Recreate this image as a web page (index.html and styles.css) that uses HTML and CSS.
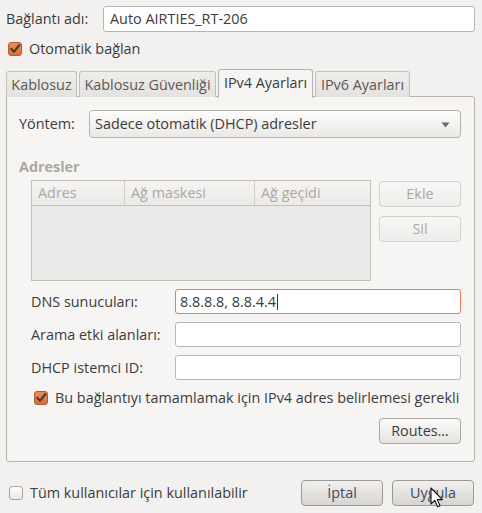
FILE: index.html
```html
<!DOCTYPE html>
<html lang="tr">
<head>
<meta charset="utf-8">
<link rel="stylesheet" href="styles.css">
</head>
<body>
<div class="dialog">
  <div class="name-row">
    <label class="lbl">Bağlantı adı:</label>
    <div class="entry name-entry">Auto AIRTIES_RT-206</div>
  </div>
  <div class="check-row auto">
    <span class="cb checked"><svg width="14" height="14" viewBox="0 0 14 14"><path d="M3.2 6.8 L6 9.8 L11.4 3" fill="none" stroke="#4a3b35" stroke-width="2.1" stroke-linecap="round" stroke-linejoin="round"/></svg></span>
    <span>Otomatik bağlan</span>
  </div>
  <div class="tabs">
    <div class="tab t1">Kablosuz</div>
    <div class="tab t2">Kablosuz Güvenliği</div>
    <div class="tab t3 active">IPv4 Ayarları</div>
    <div class="tab t4">IPv6 Ayarları</div>
  </div>
  <div class="panel">
    <div class="method-row">
      <label class="lbl">Yöntem:</label>
      <div class="combo">
        <span>Sadece otomatik (DHCP) adresler</span>
        <svg class="arrow" width="9" height="6" viewBox="0 0 9 6"><path d="M0.5 0.5 H8.5 L4.5 5.5 Z" fill="#6e6964"/></svg>
      </div>
    </div>
    <div class="section-title">Adresler</div>
    <div class="addr">
      <div class="table">
        <div class="thead">
          <div class="th c1">Adres</div>
          <div class="th c2">Ağ maskesi</div>
          <div class="th c3">Ağ geçidi</div>
        </div>
        <div class="tbody"></div>
      </div>
      <div class="side-buttons">
        <div class="btn disabled">Ekle</div>
        <div class="btn disabled">Sil</div>
      </div>
    </div>
    <div class="form">
      <div class="form-row">
        <label class="lbl">DNS sunucuları:</label>
        <div class="entry focus">8.8.8.8, 8.8.4.4<span class="caret"></span></div>
      </div>
      <div class="form-row">
        <label class="lbl">Arama etki alanları:</label>
        <div class="entry"></div>
      </div>
      <div class="form-row">
        <label class="lbl">DHCP istemci ID:</label>
        <div class="entry"></div>
      </div>
    </div>
    <div class="check-row req">
      <span class="cb checked"><svg width="14" height="14" viewBox="0 0 14 14"><path d="M3.2 6.8 L6 9.8 L11.4 3" fill="none" stroke="#4a3b35" stroke-width="2.1" stroke-linecap="round" stroke-linejoin="round"/></svg></span>
      <span>Bu bağlantıyı tamamlamak için IPv4 adres belirlemesi gerekli</span>
    </div>
    <div class="routes-row">
      <div class="btn">Routes…</div>
    </div>
  </div>
  <div class="bottom">
    <div class="check-row all">
      <span class="cb"></span>
      <span>Tüm kullanıcılar için kullanılabilir</span>
    </div>
    <div class="actions">
      <div class="btn big">İptal</div>
      <div class="btn big">Uygula</div>
    </div>
  </div>
  <svg class="cursor" width="14" height="22" viewBox="0 0 14 22"><path d="M1 1 L1 17 L4.8 13.4 L7.6 19.8 L10 18.8 L7.3 12.6 L12.4 12.6 Z" fill="#ffffff" stroke="#111" stroke-width="1.1" stroke-linejoin="round"/></svg>
</div>
</body>
</html>
```
FILE: styles.css
```css
* { box-sizing: border-box; }
html, body {
  margin: 0;
  padding: 0;
  background: #f2f1f0;
}
body {
  font-family: "Open Sans", "Noto Sans", sans-serif;
  font-size: 14.4px;
  line-height: 18px;
  color: #3c3c3c;
  width: 482px;
  height: 513px;
  overflow: hidden;
}
.dialog {
  position: relative;
  width: 482px;
  height: 513px;
}
.lbl { white-space: nowrap; }

.name-row {
  display: flex;
  align-items: center;
  padding: 6px 7px 0 6px;
}
.name-row .lbl { width: 97px; }
.entry {
  height: 25px;
  background: #fff;
  border: 1px solid #b9b6b1;
  border-radius: 3px;
  padding: 0 4px;
  display: flex;
  align-items: center;
  white-space: nowrap;
}
.name-entry { flex: 1; height: 26px; padding-left: 6px; }
.entry.focus { border-color: #ec7b4e; }
.caret {
  display: inline-block;
  width: 1px;
  height: 16px;
  background: #333;
  margin-left: 1px;
}

.check-row {
  display: flex;
  align-items: center;
  gap: 7px;
  white-space: nowrap;
}
.cb {
  width: 14px;
  height: 14px;
  border: 1px solid #a6a29d;
  border-radius: 3px;
  background: linear-gradient(#fdfdfc, #eceae7);
  flex: none;
  display: block;
  position: relative;
}
.cb.checked {
  border-color: #b45a30;
  background: linear-gradient(#ea8a58, #d86f3c);
}
.cb svg { position: absolute; left: -1px; top: -1px; }
.auto { margin: 10px 0 0 8px; height: 14px; }

.tabs {
  display: flex;
  align-items: flex-end;
  margin: 12px 0 0 6px;
  height: 29px;
  position: relative;
  z-index: 2;
}
.tab {
  height: 26px;
  border: 1px solid #c3c0bb;
  border-bottom: none;
  border-radius: 3px 3px 0 0;
  background: linear-gradient(#eeedeb, #e4e2df);
  color: #5b5855;
  display: flex;
  align-items: center;
  justify-content: center;
  white-space: nowrap;
  margin-bottom: 0;
}
.t1 { width: 71px; }
.t2 { width: 137px; margin-left: 2px; }
.t3 { width: 95px; margin-left: 2px; }
.t4 { width: 95px; margin-left: 2px; }
.tab.active {
  height: 29px;
  background: #f6f5f4;
  border-color: #b7b4af;
  color: #3c3c3c;
  margin-bottom: -1px;
  padding-bottom: 2px;
}

.panel {
  margin: -1px 7px 0 6px;
  height: 366px;
  border: 1px solid #b7b4af;
  border-radius: 0 3px 3px 3px;
  background: #f6f5f4;
  padding: 13px 13px 0 12px;
  position: relative;
  z-index: 1;
}
.method-row {
  display: flex;
  align-items: center;
}
.method-row .lbl { width: 70px; }
.combo {
  flex: 1;
  height: 28px;
  border: 1px solid #b6b3ae;
  border-radius: 4px;
  background: linear-gradient(#fcfcfb, #ebe9e6);
  display: flex;
  align-items: center;
  justify-content: space-between;
  padding: 0 10px 0 5px;
  white-space: nowrap;
}
.arrow { margin-top: 1px; }

.section-title {
  margin-top: 21px;
  font-weight: bold;
  color: #aca8a2;
  height: 16px;
  line-height: 16px;
}
.addr {
  display: flex;
  gap: 8px;
  margin: 5px 0 0 12px;
  align-items: flex-start;
}
.table {
  width: 340px;
  height: 101px;
  border: 1px solid #c4c1bc;
  background: #ebeae8;
}
.thead {
  display: flex;
  height: 25px;
  border-bottom: 1px solid #c4c1bc;
  background: linear-gradient(#f5f4f3, #eceae8);
}
.th {
  color: #aca8a2;
  padding-left: 6px;
  display: flex;
  align-items: center;
  white-space: nowrap;
}
.c1 { width: 93px; border-right: 1px solid #d2cfcb; }
.c2 { width: 130px; border-right: 1px solid #d2cfcb; }
.c3 { flex: 1; }
.side-buttons {
  display: flex;
  flex-direction: column;
  gap: 9px;
  width: 82px;
  padding-top: 1px;
}
.btn {
  height: 26px;
  border: 1px solid #a9a6a1;
  border-radius: 4px;
  background: linear-gradient(#fbfbfa, #e6e4e1);
  display: flex;
  align-items: center;
  justify-content: center;
  white-space: nowrap;
  color: #3c3c3c;
}
.btn.disabled {
  border-color: #d3d0cc;
  background: linear-gradient(#f8f7f6, #efedeb);
  color: #aca8a2;
}

.form {
  margin: 8px 0 0 12px;
  display: flex;
  flex-direction: column;
  gap: 8px;
}
.form-row {
  display: flex;
  align-items: center;
}
.form-row .lbl { width: 144px; }
.form-row .entry { flex: 1; }

.req { margin: 11px 0 0 15px; height: 14px; }
.routes-row {
  display: flex;
  justify-content: flex-end;
  margin-top: 13px;
}
.routes-row .btn { width: 82px; }

.bottom {
  display: flex;
  justify-content: space-between;
  align-items: center;
  padding: 0 8px 0 9px;
  margin-top: 18px;
}
.all { gap: 7px; }
.actions { display: flex; gap: 9px; }
.btn.big {
  width: 82px;
  height: 26px;
  border-color: #9c9892;
  background: linear-gradient(#f1f0ef, #d8d5d1);
  color: #3d4a60;
}
.cursor {
  position: absolute;
  left: 430px;
  top: 487px;
}
```
